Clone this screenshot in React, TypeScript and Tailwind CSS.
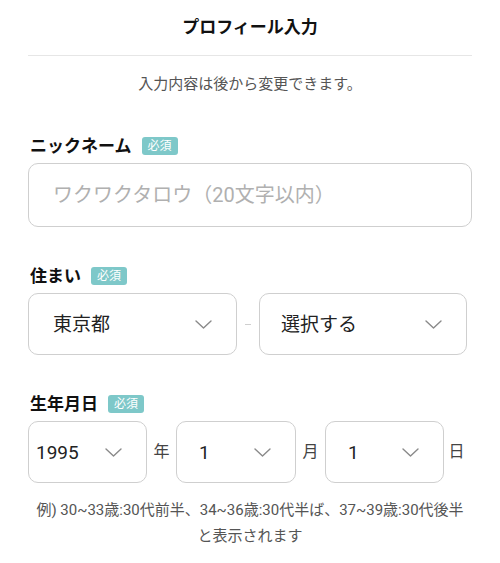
const font = { fontFamily: 'Roboto, "Noto Sans CJK JP", sans-serif' };

function Badge() {
  return (
    <span className="inline-flex h-[18px] items-center rounded-[3px] bg-[#7ec8c9] px-[6px] text-[12px] leading-none text-white">
      必須
    </span>
  );
}

function Label({ text }: { text: string }) {
  return (
    <div className="flex h-[22px] items-center gap-[10px] pl-[2px]">
      <span className="text-[17px] font-bold leading-none text-[#111]">{text}</span>
      <Badge />
    </div>
  );
}

function Chevron() {
  return (
    <svg width="17" height="9" viewBox="0 0 17 9" fill="none" className="shrink-0">
      <path d="M1 1l7.5 7 7.5-7" stroke="#8a8a8a" strokeWidth="1.4" strokeLinecap="round" strokeLinejoin="round" />
    </svg>
  );
}

function Select({ value, className, padLeft }: { value: string; className: string; padLeft: string }) {
  return (
    <div
      className={`flex h-[62px] items-center justify-between rounded-[10px] border border-[#cfcfcf] bg-white pr-[24px] ${padLeft} ${className}`}
    >
      <span className="text-[19px] leading-none text-[#222]">{value}</span>
      <Chevron />
    </div>
  );
}

export default function App() {
  return (
    <div className="min-h-[563px] w-[500px] bg-white px-[28px]" style={font}>
      <div className="flex h-[56px] items-center justify-center border-b border-[#e6e6e6]">
        <h1 className="text-[17px] font-bold text-[#111]">プロフィール入力</h1>
      </div>
      <p className="mt-[18px] text-center text-[15px] leading-[20px] text-[#555]">入力内容は後から変更できます。</p>

      <div className="mt-[41px]">
        <Label text="ニックネーム" />
        <div className="mt-[6px] flex h-[64px] items-center rounded-[10px] border border-[#cfcfcf] px-[24px]">
          <span className="text-[20px] leading-none text-[#b0b0b0]">ワクワクタロウ（20文字以内）</span>
        </div>
      </div>

      <div className="mt-[38px]">
        <Label text="住まい" />
        <div className="mt-[6px] flex items-center">
          <Select value="東京都" className="w-[209px]" padLeft="pl-[24px]" />
          <div className="flex w-[22px] justify-center">
            <span className="h-px w-[6px] bg-[#cfcfcf]" />
          </div>
          <Select value="選択する" className="w-[208px]" padLeft="pl-[21px]" />
        </div>
      </div>

      <div className="mt-[38px]">
        <Label text="生年月日" />
        <div className="mt-[6px] flex items-center">
          <Select value="1995" className="w-[119px]" padLeft="pl-[7px]" />
          <span className="flex w-[29px] justify-center text-[16px] text-[#444]">年</span>
          <Select value="1" className="w-[120px]" padLeft="pl-[22px]" />
          <span className="flex w-[29px] justify-center text-[16px] text-[#444]">月</span>
          <Select value="1" className="w-[119px]" padLeft="pl-[22px]" />
          <span className="flex w-[25px] justify-center text-[16px] text-[#444]">日</span>
        </div>
      </div>

      <p className="mt-[14px] text-center text-[15px] leading-[26px] text-[#555]">
        例) 30~33歳:30代前半、34~36歳:30代半ば、37~39歳:30代後半
        <br />
        と表示されます
      </p>
    </div>
  );
}
